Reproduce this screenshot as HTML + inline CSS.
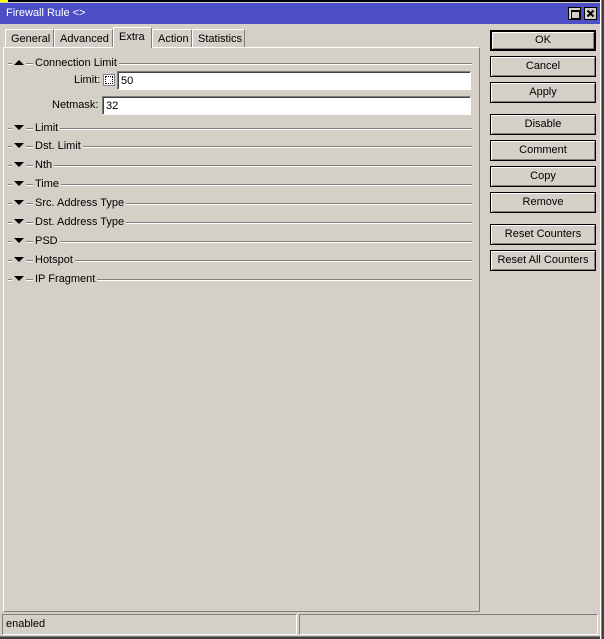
<!DOCTYPE html><html><head><style>
body{margin:0;width:604px;height:639px;background:#d4d0c8;font:11px "Liberation Sans",sans-serif;color:#000;position:relative;overflow:hidden}
.a{position:absolute}
.title{left:0;top:3px;width:600px;height:21px;background:#4d4fc6;color:#fff;font-size:11px}
.tab{position:absolute;top:29px;height:18px;border:1px solid #fff;border-right-color:#808080;border-bottom:none;background:#d4d0c8;line-height:18px;padding:0 5px;box-sizing:border-box}
.panel{left:3px;top:47px;width:477px;height:565px;border-left:1px solid #fff;border-top:1px solid #fff;border-right:1px solid #808080;border-bottom:1px solid #808080;box-sizing:border-box}
.btn{position:absolute;left:490px;width:106px;height:21px;box-sizing:border-box;border:1px solid #000;box-shadow:inset 1px 1px #fff,inset -1px -1px #808080;text-align:center;line-height:19px}
.sec{position:absolute;left:8px;width:464px;height:12px}
.sec .l{position:absolute;top:6px;left:0;right:0;border-top:1px solid #808080;border-bottom:1px solid #fff}
.sec .t{position:absolute;left:25px;top:0;background:#d4d0c8;padding:0 2px;line-height:12px}
.sec .ab{position:absolute;left:4px;top:0;width:14px;height:12px;background:#d4d0c8}
.sec .ar{position:absolute;left:6px;top:3px;width:0;height:0;border-left:5px solid transparent;border-right:5px solid transparent}
.dn{border-top:5px solid #000}.up{border-bottom:5px solid #000}
.inp{position:absolute;background:#fff;border:1px solid #808080;border-right-color:#fff;border-bottom-color:#fff;box-shadow:inset 1px 1px #404040;box-sizing:border-box;padding:3px 3px;height:19px}
.st{position:absolute;top:614px;height:21px;border:1px solid #808080;border-right-color:#fff;border-bottom-color:#fff;box-sizing:border-box;padding:3px}
</style></head><body>
<div class="a" style="left:0;top:0;width:604px;height:2px;background:#000"></div>
<div class="a" style="left:0;top:0;width:8px;height:2px;background:#ff0"></div>
<div class="a title"><span style="position:absolute;left:6px;top:4px">Firewall Rule &lt;&gt;</span>
<div class="a" style="left:568px;top:4px;width:13px;height:13px;background:#d4d0c8;border:1px solid #000;box-sizing:border-box"><div class="a" style="left:2px;top:2px;width:7px;height:6px;border:1px solid #000;border-top-width:2px"></div></div>
<div class="a" style="left:584px;top:4px;width:13px;height:13px;background:#d4d0c8;border:1px solid #000;box-sizing:border-box"><svg width="11" height="11" style="position:absolute;left:0;top:0"><path d="M2.5 2.5L8.5 8.5M8.5 2.5L2.5 8.5" stroke="#000" stroke-width="2"/></svg></div></div>
<div class="a panel"></div>
<div class="tab" style="left:5px;width:49px">General</div>
<div class="tab" style="left:54px;width:59px">Advanced</div>
<div class="tab" style="left:113px;top:27px;height:21px;width:39px;background:#d4d0c8;z-index:2">Extra</div>
<div class="tab" style="left:152px;width:40px">Action</div>
<div class="tab" style="left:192px;width:53px">Statistics</div>
<div class="sec" style="top:57px"><div class="l"></div><div class="ab"></div><div class="ar up"></div><div class="t">Connection Limit</div></div>
<div class="a" style="left:74px;top:74px">Limit:</div>
<div class="a" style="left:103px;top:74px;width:12px;height:12px;border:1px solid #808080;box-sizing:border-box;background:#fff"><div class="a" style="left:1px;top:1px;width:8px;height:8px;border:1px dotted #000;box-sizing:border-box"></div></div>
<div class="inp" style="left:117px;top:71px;width:354px">50</div>
<div class="a" style="left:52px;top:99px">Netmask:</div>
<div class="inp" style="left:102px;top:96px;width:369px">32</div>
<div class="sec" style="top:122px"><div class="l"></div><div class="ab"></div><div class="ar dn"></div><div class="t">Limit</div></div>
<div class="sec" style="top:140px"><div class="l"></div><div class="ab"></div><div class="ar dn"></div><div class="t">Dst. Limit</div></div>
<div class="sec" style="top:159px"><div class="l"></div><div class="ab"></div><div class="ar dn"></div><div class="t">Nth</div></div>
<div class="sec" style="top:178px"><div class="l"></div><div class="ab"></div><div class="ar dn"></div><div class="t">Time</div></div>
<div class="sec" style="top:197px"><div class="l"></div><div class="ab"></div><div class="ar dn"></div><div class="t">Src. Address Type</div></div>
<div class="sec" style="top:216px"><div class="l"></div><div class="ab"></div><div class="ar dn"></div><div class="t">Dst. Address Type</div></div>
<div class="sec" style="top:235px"><div class="l"></div><div class="ab"></div><div class="ar dn"></div><div class="t">PSD</div></div>
<div class="sec" style="top:254px"><div class="l"></div><div class="ab"></div><div class="ar dn"></div><div class="t">Hotspot</div></div>
<div class="sec" style="top:273px"><div class="l"></div><div class="ab"></div><div class="ar dn"></div><div class="t">IP Fragment</div></div>
<div class="btn" style="top:30px;border-width:2px;line-height:17px">OK</div>
<div class="btn" style="top:56px">Cancel</div>
<div class="btn" style="top:82px">Apply</div>
<div class="btn" style="top:114px">Disable</div>
<div class="btn" style="top:140px">Comment</div>
<div class="btn" style="top:166px">Copy</div>
<div class="btn" style="top:192px">Remove</div>
<div class="btn" style="top:224px">Reset Counters</div>
<div class="btn" style="top:250px">Reset All Counters</div>
<div class="st" style="left:2px;width:295px">enabled</div>
<div class="st" style="left:299px;width:299px"></div>
<div class="a" style="left:0;top:636px;width:604px;height:1px;background:#808080"></div>
<div class="a" style="left:0;top:637px;width:604px;height:2px;background:#404040"></div>
<div class="a" style="left:600px;top:0;width:1px;height:639px;background:#fff"></div>
<div class="a" style="left:601px;top:0;width:1px;height:639px;background:#808080"></div>
<div class="a" style="left:602px;top:0;width:2px;height:639px;background:#404040"></div>
</body></html>
